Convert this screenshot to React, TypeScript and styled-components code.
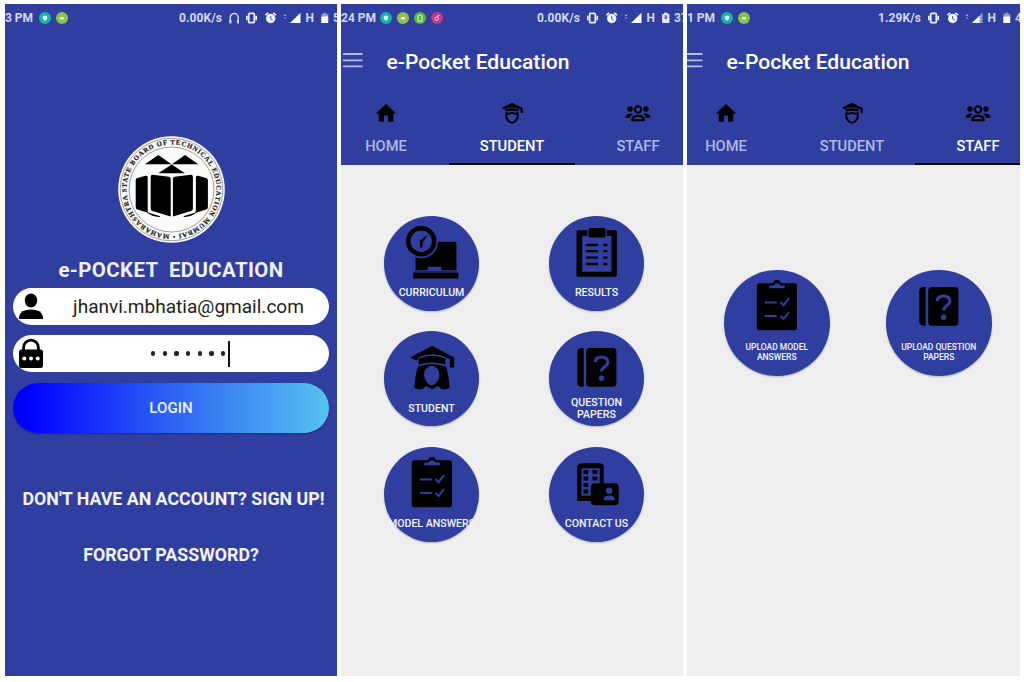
import React from "react";
import styled, { createGlobalStyle } from "styled-components";

const BLUE = "#303f9f";
const PALE = "#d3d9f5";

const GlobalStyle = createGlobalStyle`
  * { box-sizing: border-box; }
  body { margin: 0; background: #fff; font-family: Roboto, "Liberation Sans", sans-serif; }
  svg { display: block; flex: none; }
`;

const Board = styled.main`
  display: flex;
  gap: 4px;
  width: 1024px;
  height: 682px;
  padding: 4px 4px 6px 5px;
  overflow: hidden;
`;

const Phone = styled.section<{ $width: number; $bg: string }>`
  display: flex;
  flex-direction: column;
  flex: none;
  width: ${(p) => p.$width}px;
  height: 672px;
  overflow: hidden;
  background: ${(p) => p.$bg};
`;

const StatusRow = styled.div`
  display: flex;
  align-items: center;
  justify-content: space-between;
  flex: none;
  height: 28px;
  color: ${PALE};
  font-size: 12px;
  font-weight: 700;
  white-space: nowrap;
`;

const Clock = styled.div`
  display: flex;
  align-items: center;
  gap: 5px;
`;

const ClockText = styled.span<{ $width: number }>`
  width: ${(p) => p.$width}px;
`;

const Indicators = styled.div<{ $width: number }>`
  display: flex;
  align-items: center;
  flex: none;
  width: ${(p) => p.$width}px;
`;

const Speed = styled.span`
  width: 49.5px;
  flex: none;
  letter-spacing: 0.1px;
`;

const Letter = styled.span`
  width: 15px;
  flex: none;
`;

const Slot = styled.span<{ $width: number }>`
  display: block;
  flex: none;
  width: ${(p) => p.$width}px;
`;

const LoginBody = styled.div`
  display: flex;
  flex-direction: column;
  align-items: center;
  padding: 104px 8px 0;
`;

const AppName = styled.h1`
  margin: 13px 0 5px;
  height: 27px;
  line-height: 28px;
  color: #eef0ff;
  font-size: 20.4px;
  font-weight: 700;
  letter-spacing: 0.4px;
  white-space: pre;
`;

const Field = styled.div`
  display: flex;
  align-items: center;
  width: 316px;
  height: 37px;
  margin-bottom: 10px;
  padding-left: 5px;
  border-radius: 19px;
  background: #fff;
`;

const FieldText = styled.span`
  flex: 1;
  padding-left: 4px;
  text-align: center;
  color: #222;
  font-size: 19.05px;
`;

const Secret = styled.span`
  display: flex;
  align-items: center;
  gap: 7.5px;
  margin-left: 107px;
`;

const Bullet = styled.i`
  width: 4.2px;
  height: 4.2px;
  border-radius: 50%;
  background: #222;
`;

const Caret = styled.i`
  width: 2px;
  height: 26px;
  margin-left: -5px;
  background: #111;
`;

const LoginButton = styled.button`
  width: 316px;
  height: 50px;
  margin: 1px 0 0;
  padding: 0;
  border: 0;
  border-radius: 25px;
  background: linear-gradient(90deg, #0000ff 4%, #2b5ff5 48%, #54bfee 98%);
  box-shadow: 0 1px 2px rgba(0, 0, 0, 0.35);
  color: #eef2ff;
  font: 500 15.1px Roboto, sans-serif;
`;

const TextLink = styled.a<{ $top: number; $shift?: number }>`
  margin-top: ${(p) => p.$top}px;
  padding-left: ${(p) => p.$shift || 0}px;
  height: 22px;
  line-height: 22px;
  color: #f1f3ff;
  font-size: 17.8px;
  font-weight: 700;
  white-space: nowrap;
`;

const Header = styled.header`
  flex: none;
  height: 161px;
  background: ${BLUE};
`;

const TitleRow = styled.div<{ $shift: number }>`
  display: flex;
  align-items: center;
  height: 58px;
  margin-left: ${(p) => -p.$shift}px;
`;

const Title = styled.h2`
  margin: 0 0 0 23.5px;
  padding-top: 1px;
  color: #fff;
  font-size: 21.1px;
  font-weight: 500;
  white-space: nowrap;
`;

const Tabs = styled.nav<{ $shift: number }>`
  display: flex;
  width: 378px;
  height: 75px;
  margin-left: ${(p) => -18 - p.$shift}px;
`;

const Tab = styled.div<{ $active: boolean }>`
  display: flex;
  flex-direction: column;
  align-items: center;
  width: 126px;
  padding-top: 12px;
  border-bottom: 2.5px solid ${(p) => (p.$active ? "#000" : "transparent")};
  color: ${(p) => (p.$active ? "#fff" : "#b0b9e6")};
  font-size: 14.7px;
  font-weight: 500;
  line-height: 20px;
  gap: 11.5px;
`;

const RoundGrid = styled.div<{ $size: number; $colGap: number; $rowGap: number; $top: number; $left: number }>`
  display: grid;
  grid-template-columns: repeat(2, ${(p) => p.$size}px);
  gap: ${(p) => p.$rowGap}px ${(p) => p.$colGap}px;
  padding: ${(p) => p.$top}px 0 0 ${(p) => p.$left}px;
`;

const RoundButton = styled.div<{ $size: number }>`
  display: flex;
  flex-direction: column;
  align-items: center;
  width: ${(p) => p.$size}px;
  height: ${(p) => p.$size}px;
  padding-top: 10px;
  border-radius: 50%;
  background: ${BLUE};
  box-shadow: 0 1px 2px rgba(0, 0, 0, 0.25);
`;

const RoundLabel = styled.span<{ $small: boolean }>`
  display: flex;
  align-items: center;
  flex: none;
  height: ${(p) => (p.$small ? 36 : 28)}px;
  color: #f4f5ff;
  font-size: ${(p) => (p.$small ? 8.5 : 10.6)}px;
  font-weight: 500;
  line-height: ${(p) => (p.$small ? 10 : 12.5)}px;
  text-align: center;
  white-space: pre;
`;

/* ---------- status bar drawings ---------- */

type BadgeKind = "shield" | "droid" | "frame" | "music";
const badgeColor: Record<BadgeKind, string> = {
  shield: "#12b5a6",
  droid: "#8bc34a",
  frame: "#5fb83c",
  music: "#c2378c",
};

const Badge = ({ kind }: { kind: BadgeKind }) => (
  <svg width="12" height="12" viewBox="0 0 12 12">
    <circle cx="6" cy="6" r="6" fill={badgeColor[kind]} />
    {kind === "shield" && <path d="M3.8 4.3 6 3.6l2.200.7v1.800C8.200 7.300 7.200 8.200 6 8.700 4.800 8.200 3.800 7.300 3.800 6.100z" fill="#e8fffb" />}
    {kind === "droid" && <path d="M3.700 7.200a2.300 2.300 0 0 1 4.600 0z" fill="#fff" />}
    {kind === "frame" && <path d="M4 3.600h1l.3-.8h1.400l.3.8h1v5.600H4z" fill="none" stroke="#e9ffd9" strokeWidth=".9" />}
    {kind === "music" && (
      <g fill="none" stroke="#ffd5e6" strokeWidth="1">
        <circle cx="5.600" cy="6.700" r="1.700" />
        <path d="M6.900 5.500V3.600h1.600" />
      </g>
    )}
  </svg>
);

const Headphones = () => (
  <svg width="12" height="12" viewBox="0 0 12 12">
    <path d="M1.200 11.300V5.600a4 4 0 0 1 8 0v5.700" fill="none" stroke={PALE} strokeWidth="1.500" />
    <path d="M.5 8h2v3.300h-2zM7.900 8h2v3.300h-2z" fill={PALE} />
  </svg>
);

const Vibrate = () => (
  <svg width="12" height="12" viewBox="0 0 12 12">
    <rect x="2.700" y="1.300" width="5.600" height="9.400" rx="1" fill="none" stroke="#eef0ff" strokeWidth="1.700" />
    <path d="M.8 3.800v4.400M10.200 3.800v4.400" stroke="#eef0ff" strokeWidth="1.700" />
  </svg>
);

const Alarm = () => (
  <svg width="12" height="12" viewBox="0 0 12 12">
    <circle cx="5.700" cy="6.500" r="4.700" fill="#f4f5ff" />
    <path d="M.4 3.200 3.200.8M11 3.200 8.200.8" stroke="#f4f5ff" strokeWidth="1.600" />
    <path d="M5.700 3.900v3l2 1.200" fill="none" stroke={BLUE} strokeWidth=".9" />
  </svg>
);

const Traffic = () => (
  <svg width="3" height="12" viewBox="0 0 3 12">
    <path d="M.2 3.300h1.800M.2 6h1.800" stroke="#aeb7e4" strokeWidth="1.200" />
  </svg>
);

const Signal = ({ weak }: { weak?: boolean }) => (
  <svg width="11" height="12" viewBox="0 0 11 12">
    <path d="M0 11 10.500.8V11z" fill={weak ? "#8f9ad3" : "#fff"} />
    {weak && <path d="M0 11 7.600 3.600V11z" fill="#fff" />}
  </svg>
);

const Battery = ({ level, charging }: { level: number; charging?: boolean }) => (
  <svg width="8" height="12" viewBox="0 0 8 12">
    <path d="M2.200.8h3.200v1.200h1.800V11H.4V2h1.800z" fill="#8f9ad3" />
    <path d={`M.4 ${level}h6.800V11H.4z`} fill="#fff" />
    {charging && (
      <>
        <path d="M2.200.8h3.200v1.200h1.800V11H.4V2h1.800z" fill="#e8ebfb" />
        <path d="M2.500 3.200h2.700v4H2.500z" fill="#6b78c2" />
      </>
    )}
  </svg>
);

type StatusProps = {
  time: string;
  timeWidth: number;
  badges: BadgeKind[];
  speed: string;
  headphones?: boolean;
  charging?: boolean;
  weak?: boolean;
  charge: string;
  width: number;
};

const StatusBar = (p: StatusProps) => (
  <StatusRow>
    <Clock>
      <ClockText $width={p.timeWidth}>{p.time}</ClockText>
      {p.badges.map((b) => (
        <Badge key={b} kind={b} />
      ))}
    </Clock>
    <Indicators $width={p.width}>
      <Speed>{p.speed}</Speed>
      {p.headphones && <Slot $width={17}><Headphones /></Slot>}
      <Slot $width={19}><Vibrate /></Slot>
      <Slot $width={19.5}><Alarm /></Slot>
      <Slot $width={6}><Traffic /></Slot>
      <Slot $width={15.5}><Signal weak={p.weak} /></Slot>
      <Letter>H</Letter>
      <Slot $width={12.5}><Battery level={4.5} charging={p.charging} /></Slot>
      <span>{p.charge}</span>
    </Indicators>
  </StatusRow>
);

/* ---------- login drawings ---------- */

const Emblem = () => (
  <svg width="107" height="107" viewBox="0 0 107 107">
    <defs>
      <path id="ring" d="M53.500 98.500a45 45 0 0 1 0-90a45 45 0 0 1 0 90" />
      <path id="wing" d="M19.500 42 27.500 39.800Q29.700 39.300 29.700 41.500V74.500Q29.700 76.500 31.500 77L41.500 80Q43 81 41 81Q34 80.500 29 76.500L19.500 73.500Q17.700 73 17.700 71V44Q17.700 42.500 19.500 42z" />
      <path id="page" d="M34.800 38.800 51 40.700Q52.700 41 52.700 43V80.500L34.500 75Q32.700 74.500 32.700 72.500V41Q32.700 38.600 34.800 38.800z" />
    </defs>
    <circle cx="53.500" cy="53.500" r="53.300" fill="#fafafa" />
    <circle cx="53.500" cy="53.500" r="51.300" fill="none" stroke="#777" strokeWidth=".7" />
    <circle cx="53.500" cy="53.500" r="42.500" fill="none" stroke="#777" strokeWidth=".7" />
    <text fontFamily="Liberation Serif, serif" fontWeight="700" fontSize="6.800" fill="#111" stroke="#111" strokeWidth=".15">
      <textPath href="#ring" startOffset="2" textLength="279">
        MAHARASHTRA STATE BOARD OF TECHNICAL EDUCATION MUMBAI •
      </textPath>
    </text>
    <path d="M27 28.300 40.300 19 53.500 28.300zM53.900 28.300 67 19 80.300 28.300zM40.300 37.200 53.700 28.500 67 37.200z" />
    <use href="#wing" />
    <use href="#page" />
    <use href="#wing" transform="matrix(-1 0 0 1 107.600 0)" />
    <use href="#page" transform="matrix(-1 0 0 1 107.600 0)" />
  </svg>
);

const UserIcon = () => (
  <svg width="26" height="28" viewBox="0 0 26 28">
    <ellipse cx="13" cy="7.500" rx="6.200" ry="7" />
    <path d="M1 26V23.500Q2.500 16.500 13 16.500T25 23.500v2.500z" />
  </svg>
);

const LockIcon = () => (
  <svg width="26" height="31" viewBox="0 0 26 31">
    <path d="M5.600 12.500V9.500a7.400 7.400 0 0 1 14.800 0v3" fill="none" stroke="#000" strokeWidth="2.800" />
    <rect x="1" y="11.500" width="24" height="18.500" rx="2.500" />
    <g fill="#fff">
      <circle cx="6.300" cy="20.500" r="2" />
      <circle cx="13" cy="20.500" r="2" />
      <circle cx="19.700" cy="20.500" r="2" />
    </g>
  </svg>
);

/* ---------- header drawings ---------- */

const MenuIcon = () => (
  <svg width="22" height="18" viewBox="0 0 22 18">
    <path d="M2 2h19.500M2 8.300h19.500M2 14.300h19.500" stroke="#b4bde9" strokeWidth="1.800" />
  </svg>
);

const HomeIcon = () => (
  <svg width="24" height="22" viewBox="0 0 24 22">
    <path d="M12 2 22.200 11.500H19.300V19.800h-5.200V13.400H10V19.800H4.700V11.500H1.800z" />
  </svg>
);

const GraduateIcon = () => (
  <svg width="24" height="22" viewBox="0 0 24 22">
    <path d="M1.300 6 12 .8l10.700 5.200v5h-2V7.600L18.500 6.800V9.600Q12 7.900 5.500 9.600V7z" />
    <path d="M6.200 6.900Q12 4.500 17.800 6.900" fill="none" stroke={BLUE} strokeWidth=".8" />
    <path d="M6.400 11.200Q9.500 12.400 12 10.800Q14.500 12.400 17.600 11.200Q18.700 17 14.300 20Q12 21.300 9.700 20Q5.300 17 6.400 11.200z" fill="none" stroke="#000" strokeWidth="1.900" />
  </svg>
);

const GroupIcon = () => (
  <svg width="26" height="22" viewBox="0 0 26 22">
    <circle cx="5" cy="7" r="2.700" />
    <circle cx="21" cy="7" r="2.700" />
    <circle cx="13" cy="7.500" r="3.200" fill="none" stroke="#000" strokeWidth="2.100" />
    <path d="M.5 15.800Q1 11.600 5.500 11.600L8 12Q5.500 13.500 5 15.800zM25.500 15.800Q25 11.600 20.500 11.600L18 12Q20.500 13.500 21 15.800z" />
    <path d="M7.200 18.300Q7.500 13.800 13 13.800T18.800 18.300z" fill="none" stroke="#000" strokeWidth="2.100" strokeLinejoin="round" />
  </svg>
);

/* ---------- round button drawings ---------- */

const Art = ({ children }: { children: React.ReactNode }) => (
  <svg width="54" height="54" viewBox="0 0 54 54">{children}</svg>
);

const CurriculumArt = () => (
  <Art>
    <path d="M12 15.700H49.500Q51.500 15.700 51.500 17.700V44.300H36.200V40.700H22.800V44.300H10.500V17.200Q10.500 15.700 12 15.700z" />
    <rect x="8.200" y="46.500" width="45.300" height="6" rx="1" />
    <path d="M10 45.500H51.500" stroke="#000" strokeWidth=".4" />
    <circle cx="16.200" cy="15.200" r="17" fill={BLUE} />
    <circle cx="16.200" cy="15.200" r="13" fill="none" stroke="#000" strokeWidth="4.600" />
    <path d="M22.800 8.700 18.300 15.200 17 21.800H15.400L14.600 14.800z" />
  </Art>
);

const ResultsArt = () => (
  <Art>
    <rect x="6.500" y="4.300" width="40.400" height="46.400" rx="1.500" />
    <path d="M12.200 10H41.500V45.700H12.200z" fill={BLUE} />
    <rect x="17.300" y="1" width="19.500" height="11.500" rx="2" fill={BLUE} />
    <rect x="18.600" y="2" width="17" height="9.500" rx="1.500" />
    <path d="M16.200 19H28M16.200 25.200H28M16.200 31.700H28M16.200 38H28M33.200 19h4.200M33.200 25.200h4.200M33.200 31.700h4.200M33.200 38h4.200" stroke="#000" strokeWidth="2.300" />
  </Art>
);

const StudentArt = () => (
  <Art>
    <path d="M5.200 16.400 27.200 4.800 49.200 16.400V26.500H44.800V18L41 16.800Q27 10 13.500 16.800L11.500 19.500z" />
    <path d="M13.500 17.300Q27 11.500 40.500 17.300V23.500Q27 19.300 13.500 23.500z" />
    <path d="M14 16.800Q27 11 40.300 16.800" fill="none" stroke={BLUE} strokeWidth="1.300" />
    <path d="M13 25.500Q27 20.500 41 25.500Q43.500 33 44.700 47Q40 49.300 36.500 48L33 45L27 48.300L21 45L17.500 48Q14 49.300 9.200 47Q10.500 33 13 25.500z" />
    <path d="M26.700 24.500Q30 25 33 28.500Q36.300 34 32.500 40Q29.500 44.300 26.700 44.300T21 40Q17.200 34 20.500 28.500Q23.500 25 26.700 24.500z" fill={BLUE} />
  </Art>
);

const QuestionArt = () => (
  <Art>
    <path d="M13.700 7.100V45.800H11Q7.300 45 7.300 41.500V11Q7.300 7.500 11 7.100z" />
    <rect x="16.200" y="7.100" width="30.200" height="38.700" rx="3.500" />
    <path d="M25.200 21Q25.500 16 31.500 16T38 21.300C38 25.500 31.700 25.500 31.500 30.500" fill="none" stroke={BLUE} strokeWidth="3.100" />
    <circle cx="31.500" cy="37.200" r="2.700" fill={BLUE} />
  </Art>
);

const ChecklistArt = () => (
  <Art>
    <circle cx="27" cy="3.800" r="3.700" />
    <rect x="6.800" y="3.200" width="40.200" height="47" rx="2.500" />
    <path d="M19.300 8.300V5.600H23.800Q24.500 3.300 27 3.300T30.300 5.600H34.800V8.300z" fill={BLUE} />
    <path d="M14.800 22.500H26.700M14.800 36H26.700M30.600 22 33.600 25.200 39 18.200M30.600 35.800 33.600 39 39 32" fill="none" stroke={BLUE} strokeWidth="1.900" />
  </Art>
);

const ContactArt = () => (
  <Art>
    <path d="M12 6.300H29.500Q33.800 6.300 33.800 10.500V44H7.200V10.500Q7.200 6.300 12 6.300z" />
    <path d="M11.500 11.300H29.700V38.700H11.500z" fill={BLUE} />
    <path d="M13.500 13h4.800v4h-4.800zM22.500 13h4.800v4h-4.800zM13.500 19.500h4.800v4h-4.800zM22.500 19.500h4.800v4h-4.800zM13.500 26h4.800v4h-4.800zM13.500 32.500h4.800v4h-4.800z" />
    <rect x="20.800" y="26.300" width="28" height="22" rx="4" />
    <g fill={BLUE}>
      <circle cx="39.200" cy="33.800" r="3.200" />
      <path d="M33.500 43.300Q33.500 38.600 39.200 38.600T45 43.300z" />
    </g>
  </Art>
);

/* ---------- screens ---------- */

const AppHeader = ({ active, shift, status }: { active: string; shift: number; status: StatusProps }) => (
  <Header>
    <StatusBar {...status} />
    <TitleRow $shift={shift}>
      <MenuIcon />
      <Title>e-Pocket Education</Title>
    </TitleRow>
    <Tabs $shift={shift}>
      <Tab $active={active === "HOME"}><HomeIcon />HOME</Tab>
      <Tab $active={active === "STUDENT"}><GraduateIcon />STUDENT</Tab>
      <Tab $active={active === "STAFF"}><GroupIcon />STAFF</Tab>
    </Tabs>
  </Header>
);

const studentItems = [
  { label: "CURRICULUM", art: <CurriculumArt /> },
  { label: "RESULTS", art: <ResultsArt /> },
  { label: "STUDENT", art: <StudentArt /> },
  { label: "QUESTION\nPAPERS", art: <QuestionArt /> },
  { label: "MODEL ANSWERS", art: <ChecklistArt /> },
  { label: "CONTACT US", art: <ContactArt /> },
];

const staffItems = [
  { label: "UPLOAD MODEL\nANSWERS", art: <ChecklistArt /> },
  { label: "UPLOAD QUESTION\nPAPERS", art: <QuestionArt /> },
];

export default function App() {
  return (
    <>
      <GlobalStyle />
      <Board>
        <Phone $width={332} $bg={BLUE}>
          <StatusBar time="3 PM" timeWidth={29} badges={["shield", "droid"]} speed="0.00K/s" headphones charge="52" width={158} />
          <LoginBody>
            <Emblem />
            <AppName>e-POCKET  EDUCATION</AppName>
            <Field>
              <UserIcon />
              <FieldText>jhanvi.mbhatia@gmail.com</FieldText>
            </Field>
            <Field>
              <LockIcon />
              <Secret>
                {[0, 1, 2, 3, 4, 5, 6].map((n) => <Bullet key={n} />)}
                <Caret />
              </Secret>
            </Field>
            <LoginButton>LOGIN</LoginButton>
            <TextLink $top={55} $shift={5}>DON'T HAVE AN ACCOUNT? SIGN UP!</TextLink>
            <TextLink $top={34}>FORGOT PASSWORD?</TextLink>
          </LoginBody>
        </Phone>

        <Phone $width={342} $bg="#eeeeee">
          <AppHeader
            active="STUDENT"
            shift={0}
            status={{ time: "24 PM", timeWidth: 34, badges: ["shield", "droid", "frame", "music"], speed: "0.00K/s", charging: true, charge: "37", width: 146 }}
          />
          <RoundGrid $size={95} $colGap={70} $rowGap={20.5} $top={50.500} $left={43}>
            {studentItems.map((item) => (
              <RoundButton key={item.label} $size={95}>
                {item.art}
                <RoundLabel $small={false}>{item.label}</RoundLabel>
              </RoundButton>
            ))}
          </RoundGrid>
        </Phone>

        <Phone $width={332.5} $bg="#eeeeee">
          <AppHeader
            active="STAFF"
            shift={6}
            status={{ time: "1 PM", timeWidth: 28.5, badges: ["shield", "droid"], speed: "1.29K/s", weak: true, charge: "4", width: 141.5 }}
          />
          <RoundGrid $size={105.5} $colGap={56.5} $rowGap={20} $top={105} $left={37}>
            {staffItems.map((item) => (
              <RoundButton key={item.label} $size={105.5}>
                {item.art}
                <RoundLabel $small>{item.label}</RoundLabel>
              </RoundButton>
            ))}
          </RoundGrid>
        </Phone>
      </Board>
    </>
  );
}
